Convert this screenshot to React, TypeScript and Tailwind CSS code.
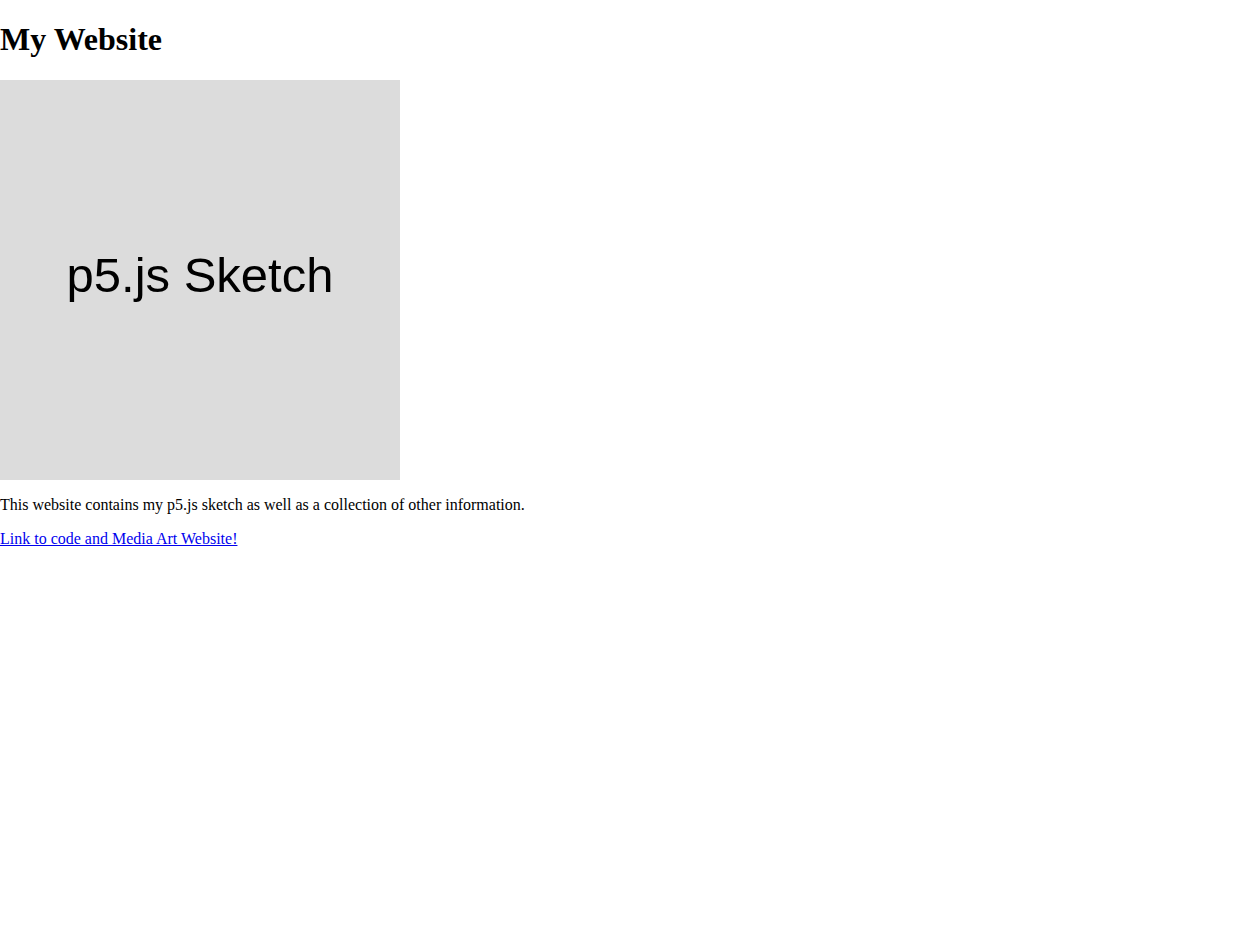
import React from 'react';

export default function App() {
  return (
    <div className="min-h-screen bg-white text-black font-['Liberation_Serif',serif] text-base">
      <h1 className="my-[21.44px] text-[32px] leading-[1.15] font-bold">My Website</h1>
      <div className="w-[400px] h-[400px] bg-[#dcdcdc] flex items-center justify-center">
        <span className="mb-2 font-['Liberation_Sans',Arial,sans-serif] text-[49px] leading-none text-black">
          p5.js Sketch
        </span>
      </div>
      <p className="my-4 leading-[1.15]">
        This website contains my p5.js sketch as well as a collection of other information.
      </p>
      <p className="my-4 leading-[1.15]">
        <a href="#" className="text-[#0000ee] underline">
          Link to code and Media Art Website!
        </a>
      </p>
    </div>
  );
}
